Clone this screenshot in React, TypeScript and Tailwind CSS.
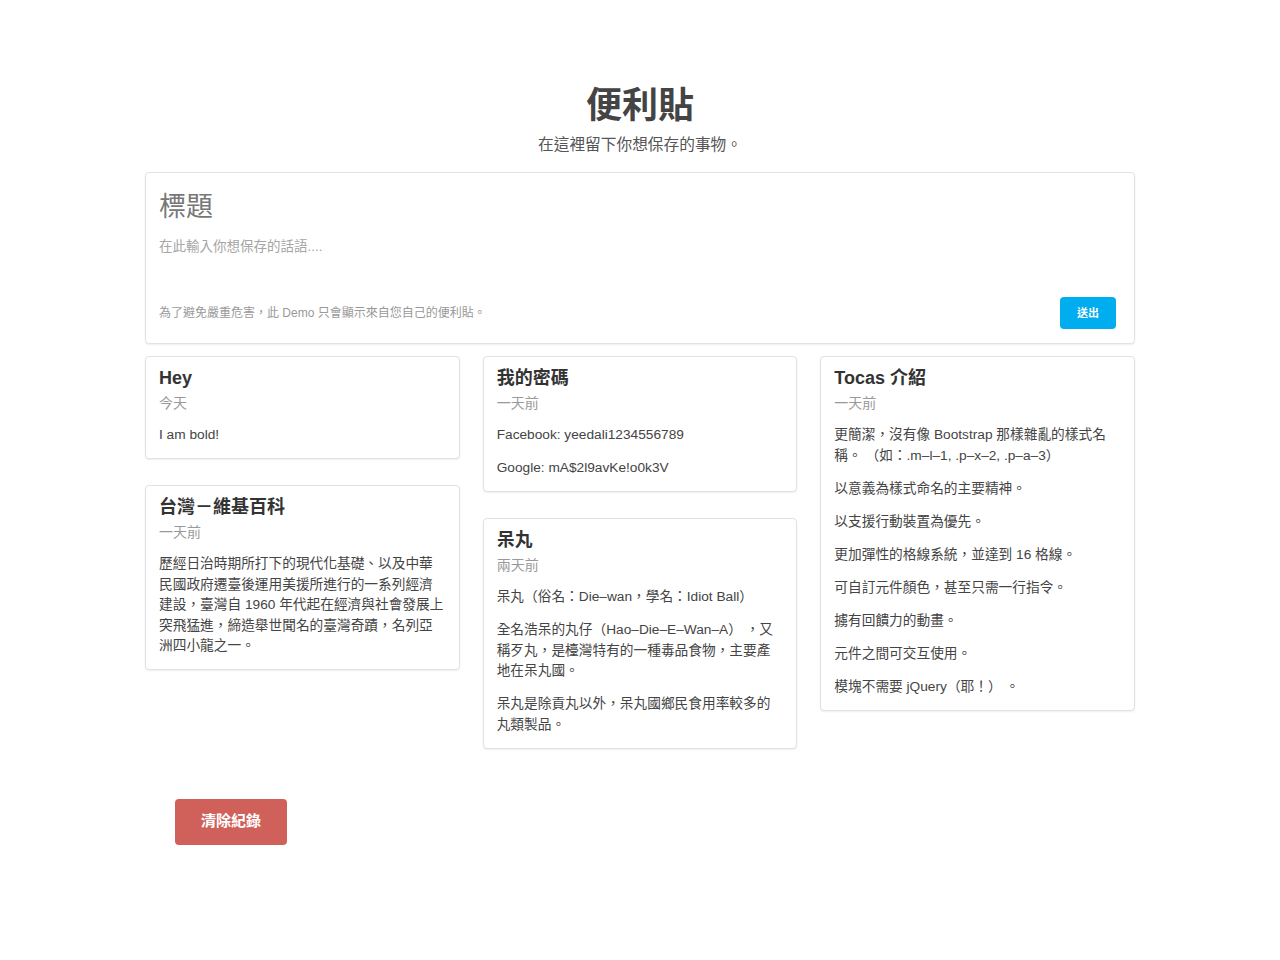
import React from "react";

type Note = {
  title: string;
  time: string;
  body: string[];
};

const columns: Note[][] = [
  [
    { title: "Hey", time: "今天", body: ["I am bold!"] },
    {
      title: "台灣－維基百科",
      time: "一天前",
      body: [
        "歷經日治時期所打下的現代化基礎、以及中華民國政府遷臺後運用美援所進行的一系列經濟建設，臺灣自 1960 年代起在經濟與社會發展上突飛猛進，締造舉世聞名的臺灣奇蹟，名列亞洲四小龍之一。",
      ],
    },
  ],
  [
    {
      title: "我的密碼",
      time: "一天前",
      body: ["Facebook: yeedali1234556789", "Google: mA$2l9avKe!o0k3V"],
    },
    {
      title: "呆丸",
      time: "兩天前",
      body: [
        "呆丸（俗名：Die–wan，學名：Idiot Ball）",
        "全名浩呆的丸仔（Hao–Die–E–Wan–A） ，又稱歹丸，是檯灣特有的一種毒品食物，主要產地在呆丸國。",
        "呆丸是除貢丸以外，呆丸國鄉民食用率較多的丸類製品。",
      ],
    },
  ],
  [
    {
      title: "Tocas 介紹",
      time: "一天前",
      body: [
        "更簡潔，沒有像 Bootstrap 那樣雜亂的樣式名稱。 （如：.m–l–1, .p–x–2, .p–a–3）",
        "以意義為樣式命名的主要精神。",
        "以支援行動裝置為優先。",
        "更加彈性的格線系統，並達到 16 格線。",
        "可自訂元件顏色，甚至只需一行指令。",
        "擄有回饋力的動畫。",
        "元件之間可交互使用。",
        "模塊不需要 jQuery（耶！） 。",
      ],
    },
  ],
];

function NoteCard({ note }: { note: Note }) {
  return (
    <div className="rounded-[4px] border border-[#e2e2e2] bg-white px-[13px] pt-[10px] pb-[12.5px] shadow-[0_1px_2px_rgba(0,0,0,0.07)]">
      <p className="text-[18px] font-bold leading-[22px] text-[#333]">{note.title}</p>
      <p className="mt-[4px] text-[14px] leading-[20px] text-[#999]">{note.time}</p>
      <div className="mt-[12px] space-y-[12.5px]">
        {note.body.map((b) => (
          <p key={b} className="text-[13.7px] leading-[20.5px] text-[#444]">
            {b}
          </p>
        ))}
      </div>
    </div>
  );
}

export default function App() {
  return (
    <div
      className="min-h-screen bg-white pt-[84px]"
      style={{ fontFamily: '"Liberation Sans", "Noto Sans CJK TC", sans-serif' }}
    >
      <div className="mx-auto w-[990px]">
        {/* Header */}
        <div className="text-center">
          <h1 className="text-[36px] font-bold leading-[44px] text-[#444]">便利貼</h1>
          <p className="mt-[6px] text-[15.7px] leading-[22px] text-[#555]">在這裡留下你想保存的事物。</p>
        </div>

        {/* Form */}
        <div className="mt-[16px] rounded-[4px] border border-[#e2e2e2] bg-white px-[13px] pt-[16px] pb-[14px] shadow-[0_1px_2px_rgba(0,0,0,0.07)]">
          <input
            className="block h-[36px] w-full text-[27px] leading-[36px] text-[#555] outline-none placeholder:text-[#777]"
            placeholder="標題"
          />
          <textarea
            className="mt-[12px] block h-[55px] w-full resize-none text-[13.5px] leading-[20px] text-[#555] outline-none placeholder:text-[#a5a5a5]"
            placeholder="在此輸入你想保存的話語...."
          />
          <div className="mt-[5px] flex items-center justify-between pr-[5px]">
            <p className="text-[12px] text-[#999]">為了避免嚴重危害，此 Demo 只會顯示來自您自己的便利貼。</p>
            <button className="h-[32px] w-[56px] rounded-[4px] bg-[#00adee] text-[11px] font-bold text-white">
              送出
            </button>
          </div>
        </div>

        {/* Notes */}
        <div className="mt-[12px] grid grid-cols-3 items-start gap-x-[23px]">
          {columns.map((col, i) => (
            <div key={i} className="flex flex-col gap-[26px]">
              {col.map((n) => (
                <NoteCard key={n.title} note={n} />
              ))}
            </div>
          ))}
        </div>

        <button className="mt-[50px] ml-[30px] h-[46px] w-[112px] rounded-[4px] bg-[#d0605a] text-[15px] font-bold text-white">
          清除紀錄
        </button>
      </div>
    </div>
  );
}
